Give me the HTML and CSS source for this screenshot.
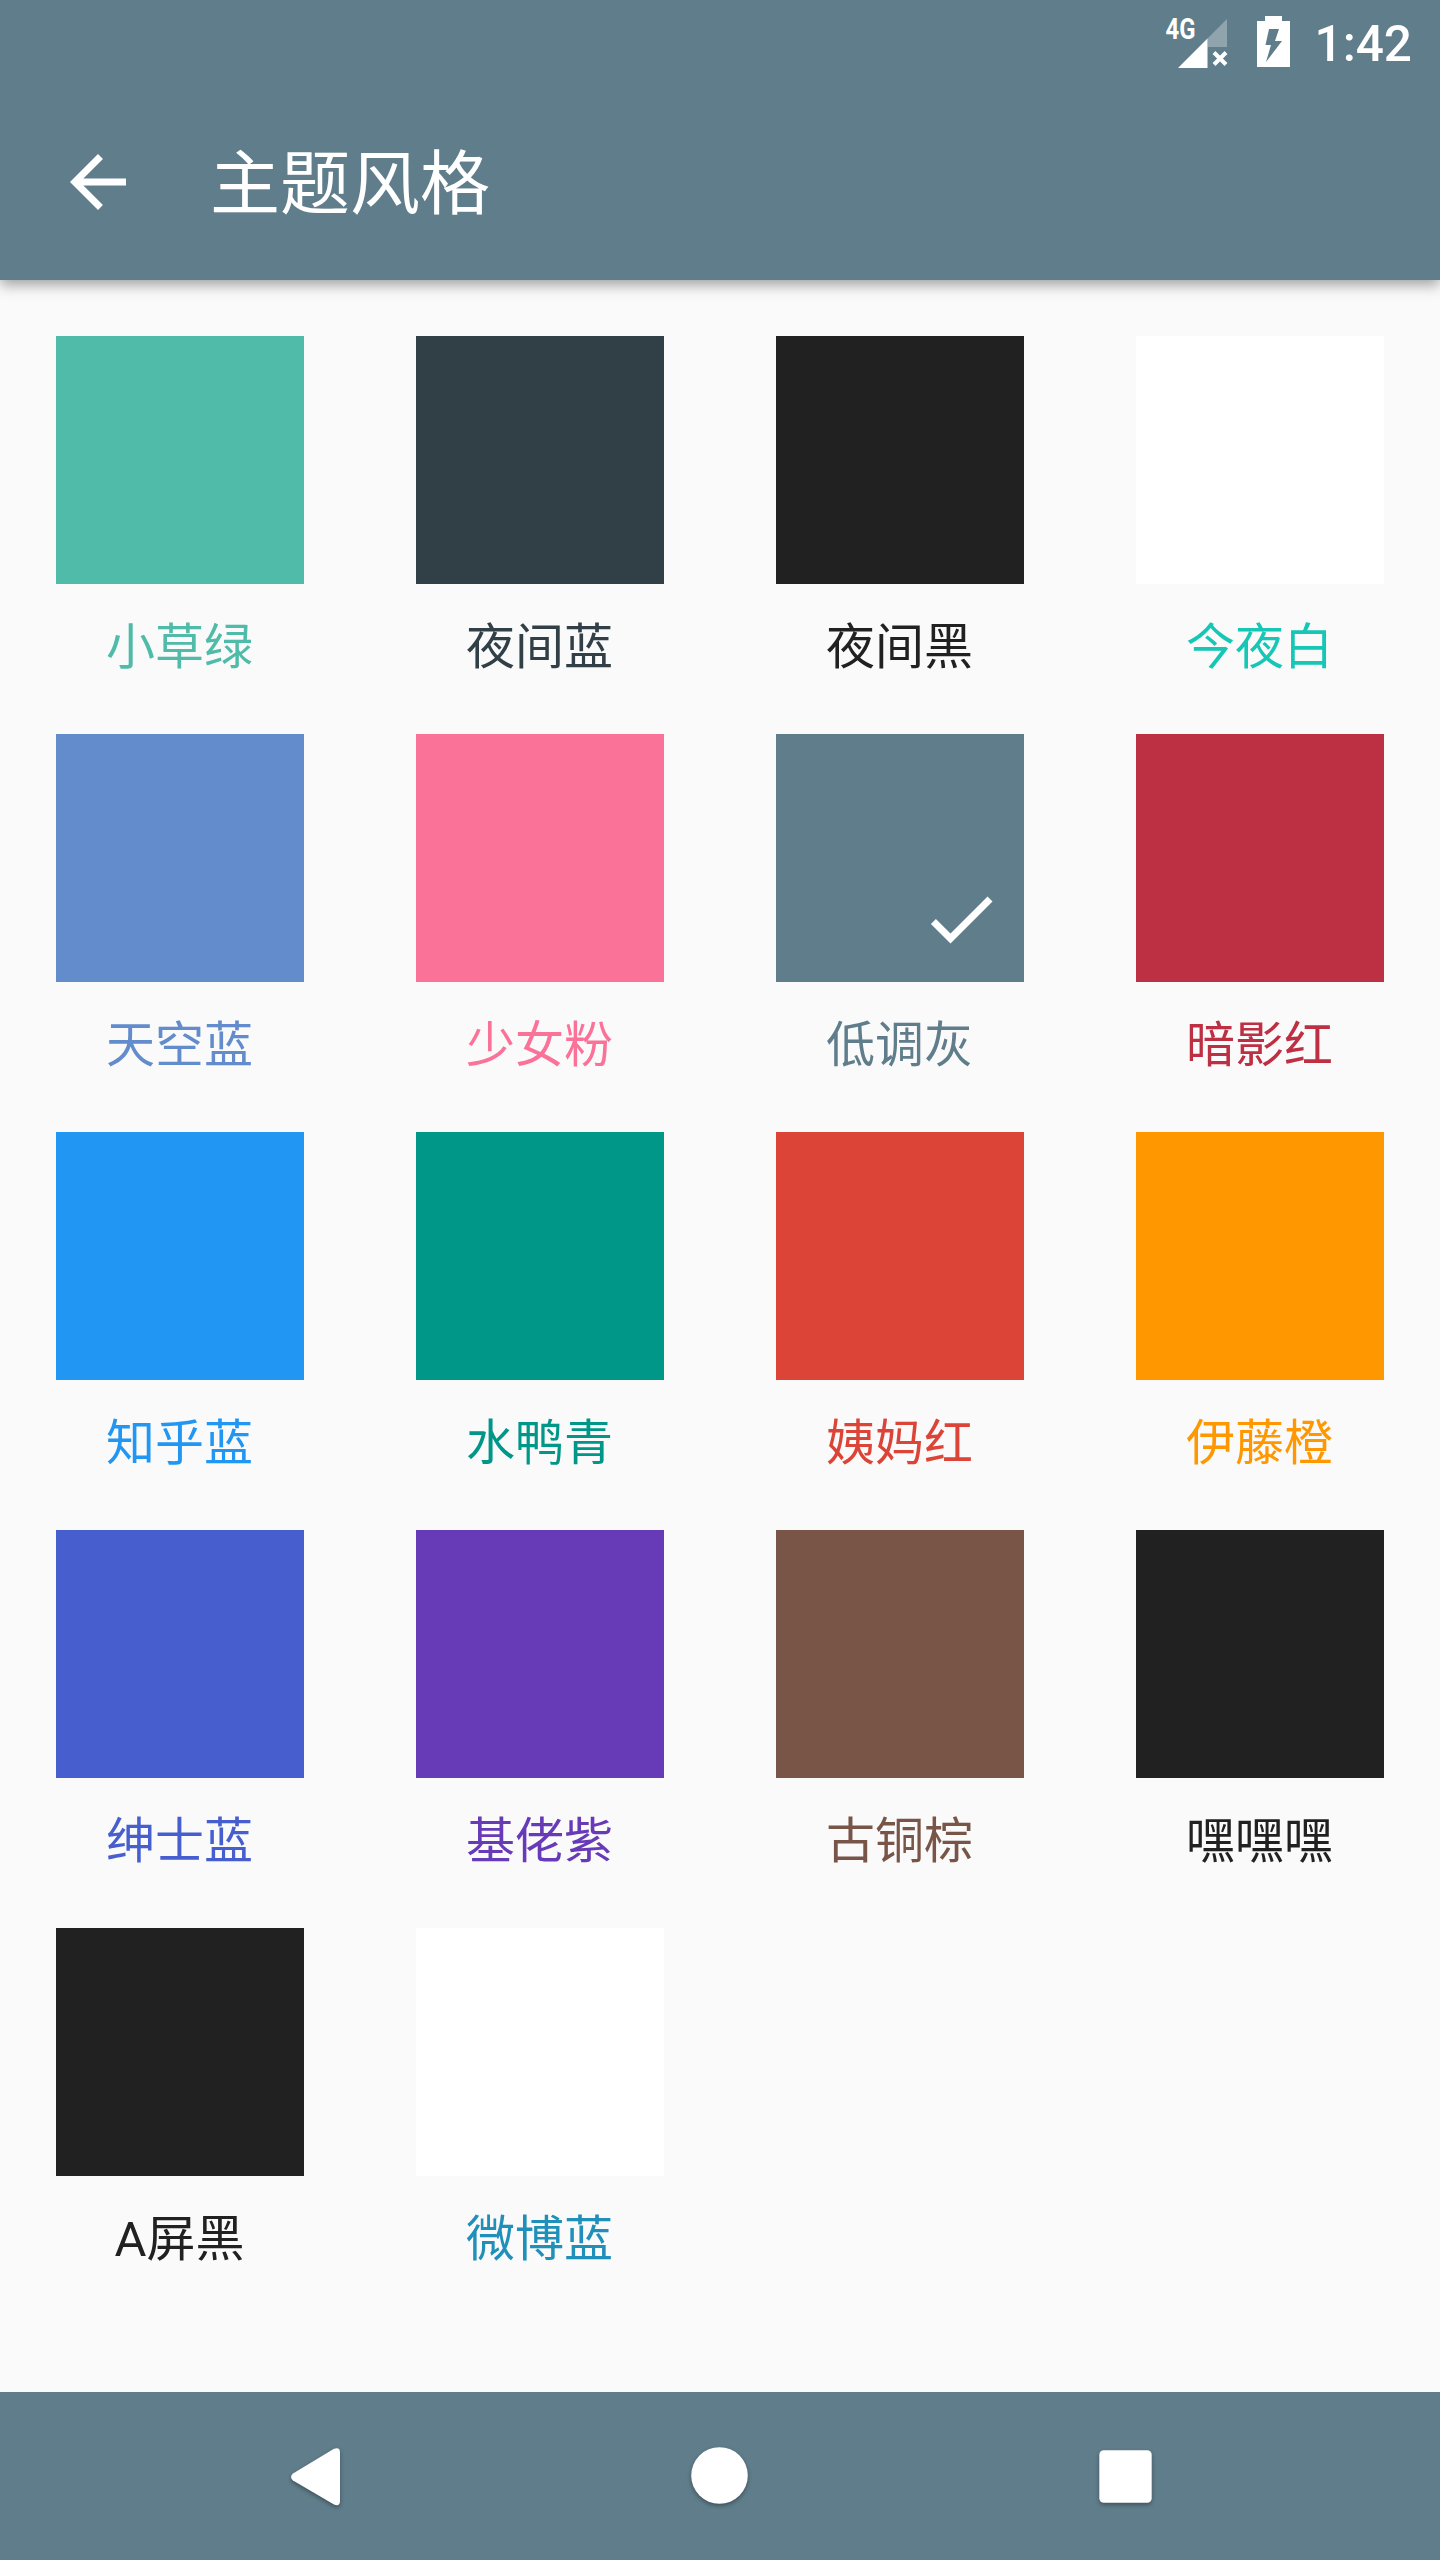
FILE: index.html
```html
<!DOCTYPE html>
<html lang="zh-CN">
<head>
  <meta charset="UTF-8">
  <meta name="viewport" content="width=device-width, initial-scale=1.0">
  <title>主题风格</title>
  <link rel="stylesheet" href="styles.css">
</head>
<body>
  <div class="screen">
    <!-- Header -->
    <header class="header">
      <div class="status-bar">
        <svg class="signal" width="70" height="84" viewBox="0 0 70 84">
          <text class="network" x="3.500" y="39" textLength="30" lengthAdjust="spacingAndGlyphs">4G</text>
          <path d="M16 68L45.500 38.500V68z" fill="#fff"/>
          <path d="M45.500 38.500L65 19V47H45.500z" fill="#fff" fill-opacity=".3"/>
          <path d="M52 52.500l12 12M64 52.500L52 64.500" stroke="#fff" stroke-width="4"/>
        </svg>
        <svg class="battery" width="33" height="84" viewBox="0 0 33 84">
          <path d="M8 16H25V21H33V67H0V21H8zM12 29L8.500 45H14L9 62L25 41H18L22 29z" fill="#fff" fill-rule="evenodd"/>
        </svg>
        <span class="time">1:42</span>
      </div>
      <div class="toolbar">
        <svg class="back" width="84" height="84" viewBox="0 0 24 24">
          <path d="M20 11H7.830l5.590-5.590L12 4l-8 8 8 8 1.410-1.410L7.830 13H20v-2z" fill="#fff"/>
        </svg>
        <h1 class="title">主题风格</h1>
      </div>
    </header>

    <!-- Themes -->
    <main class="themes">
      <div class="theme grass"><div class="swatch"></div><span class="name">小草绿</span></div>
      <div class="theme night-blue"><div class="swatch"></div><span class="name">夜间蓝</span></div>
      <div class="theme black"><div class="swatch"></div><span class="name">夜间黑</span></div>
      <div class="theme white"><div class="swatch"></div><span class="name">今夜白</span></div>

      <div class="theme sky"><div class="swatch"></div><span class="name">天空蓝</span></div>
      <div class="theme pink"><div class="swatch"></div><span class="name">少女粉</span></div>
      <div class="theme gray">
        <div class="swatch">
          <svg class="check" width="84" height="84" viewBox="0 0 24 24">
            <path d="M9 16.170L4.830 12l-1.420 1.410L9 19 21 7l-1.410-1.410z" fill="#fff"/>
          </svg>
        </div>
        <span class="name">低调灰</span>
      </div>
      <div class="theme shadow-red"><div class="swatch"></div><span class="name">暗影红</span></div>

      <div class="theme zhihu"><div class="swatch"></div><span class="name">知乎蓝</span></div>
      <div class="theme teal"><div class="swatch"></div><span class="name">水鸭青</span></div>
      <div class="theme red"><div class="swatch"></div><span class="name">姨妈红</span></div>
      <div class="theme orange"><div class="swatch"></div><span class="name">伊藤橙</span></div>

      <div class="theme indigo"><div class="swatch"></div><span class="name">绅士蓝</span></div>
      <div class="theme purple"><div class="swatch"></div><span class="name">基佬紫</span></div>
      <div class="theme brown"><div class="swatch"></div><span class="name">古铜棕</span></div>
      <div class="theme black"><div class="swatch"></div><span class="name">嘿嘿嘿</span></div>

      <div class="theme black"><div class="swatch"></div><span class="name">A屏黑</span></div>
      <div class="theme weibo"><div class="swatch"></div><span class="name">微博蓝</span></div>
    </main>

    <!-- Navigation bar -->
    <nav class="nav-bar">
      <svg class="nav-icon" width="84" height="84" viewBox="0 0 84 84">
        <path d="M67 18.500V66.500Q67 73 61 70.500L20 46.500Q16 43 20 39.500L61 14.800Q67 12.500 67 18.500z" fill="#fff"/>
      </svg>
      <svg class="nav-icon" width="84" height="84" viewBox="0 0 84 84">
        <circle cx="41.500" cy="41.500" r="28.300" fill="#fff"/>
      </svg>
      <svg class="nav-icon" width="84" height="84" viewBox="0 0 84 84">
        <rect x="16.300" y="16.300" width="52.400" height="52.400" rx="4.500" fill="#fff"/>
      </svg>
    </nav>
  </div>
</body>
</html>
```
FILE: styles.css
```css
body, html {
  margin: 0;
  padding: 0;
  width: 100%;
  height: 100%;
  font-family: Roboto, 'Noto Sans CJK SC', sans-serif;
  background-color: #fafafa;
  overflow: hidden;
}
.screen {
  display: flex;
  flex-direction: column;
  height: 2560px;
}
.header {
  height: 280px;
  background-color: #607d8b;
  color: #fff;
  box-shadow: 0 5px 13px rgba(0, 0, 0, 0.36);
}
.status-bar {
  display: flex;
  justify-content: flex-end;
  align-items: center;
  height: 84px;
  padding-right: 28px;
}
.network {
  font-size: 30px;
  font-weight: bold;
  fill: #fff;
}
.battery {
  margin: 0 25px;
}
.time {
  padding-top: 3px;
  font-size: 49.5px;
  font-weight: 500;
  line-height: 84px;
}
.toolbar {
  display: flex;
  align-items: center;
  height: 196px;
  padding-left: 56px;
}
.title {
  margin: 0 0 0 70px;
  padding-top: 6px;
  font-size: 70px;
  font-weight: 400;
  line-height: 84px;
}
.themes {
  flex: 1;
  display: grid;
  grid-template-columns: repeat(4, 360px);
  grid-auto-rows: 398px;
}
.theme {
  display: flex;
  flex-direction: column;
  align-items: center;
  padding-top: 56px;
}
.swatch {
  display: flex;
  flex-shrink: 0;
  justify-content: flex-end;
  align-items: flex-end;
  width: 248px;
  height: 248px;
  background-color: currentColor;
}
.check {
  margin: 0 21px 21px 0;
}
.name {
  margin: 34px 1px 0 0;
  font-size: 49px;
  line-height: 60px;
}

/* Theme colors */
.grass { color: #50bba8; }
.night-blue { color: #313f46; }
.black { color: #212121; }
.white { color: #17c7b5; }
.sky { color: #628ccb; }
.pink { color: #fb7299; }
.gray { color: #607d8b; }
.shadow-red { color: #bd2f43; }
.zhihu { color: #2196f3; }
.teal { color: #009688; }
.red { color: #db4437; }
.orange { color: #ff9800; }
.indigo { color: #475ece; }
.purple { color: #673ab7; }
.brown { color: #795548; }
.weibo { color: #2090bb; }
.white .swatch,
.weibo .swatch {
  background-color: #fff;
}

.nav-bar {
  display: flex;
  justify-content: space-between;
  align-items: center;
  height: 168px;
  padding: 0 273px;
  background-color: #607d8b;
}
.nav-icon {
  filter: drop-shadow(0 2px 2px rgba(0, 0, 0, 0.35));
}
```
